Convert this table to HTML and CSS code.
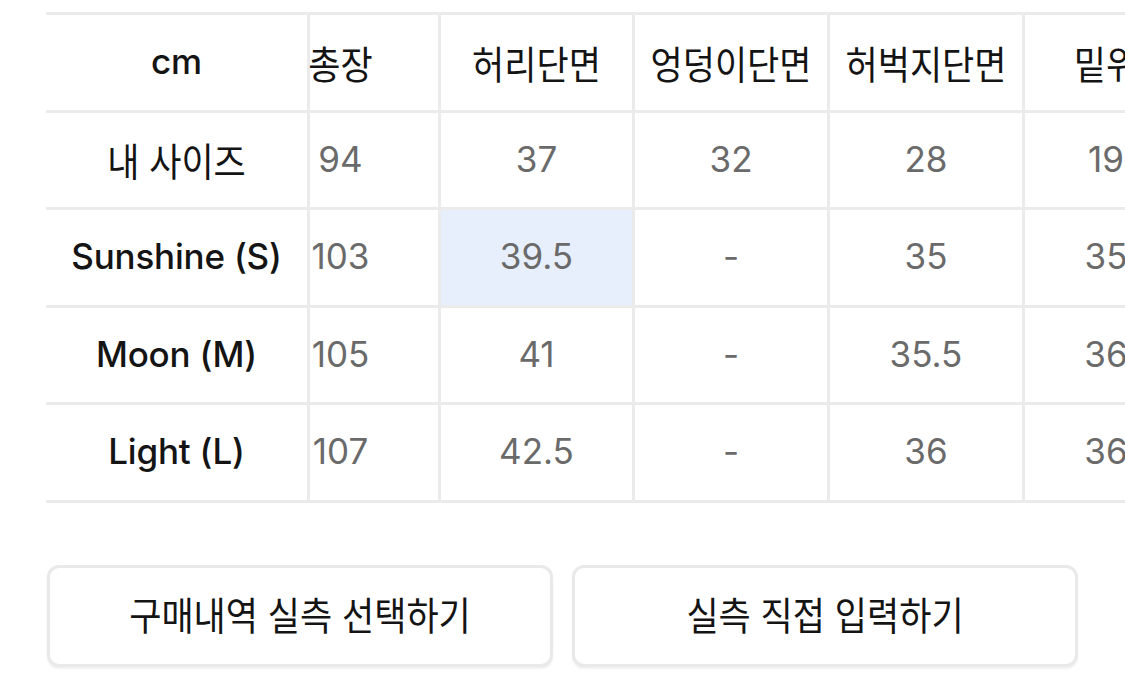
FILE: index.html
```html
<!DOCTYPE html>
<html lang="ko">
<head>
<meta charset="utf-8">
<title>사이즈</title>
<link rel="stylesheet" href="styles.css">
</head>
<body>
<div class="page">
  <div class="table">
    <div class="cell head lat">cm</div>
    <div class="cell head ko first"><span class="k">총장</span></div>
    <div class="cell head ko"><span class="k">허리단면</span></div>
    <div class="cell head ko"><span class="k">엉덩이단면</span></div>
    <div class="cell head ko"><span class="k">허벅지단면</span></div>
    <div class="cell head ko"><span class="k">밑위</span></div>

    <div class="cell head ko"><span class="k">내 사이즈</span></div>
    <div class="cell val first">94</div>
    <div class="cell val">37</div>
    <div class="cell val">32</div>
    <div class="cell val">28</div>
    <div class="cell val">19</div>

    <div class="cell head lat">Sunshine (S)</div>
    <div class="cell val first">103</div>
    <div class="cell val hl">39.5</div>
    <div class="cell val">-</div>
    <div class="cell val">35</div>
    <div class="cell val">35</div>

    <div class="cell head lat">Moon (M)</div>
    <div class="cell val first">105</div>
    <div class="cell val">41</div>
    <div class="cell val">-</div>
    <div class="cell val">35.5</div>
    <div class="cell val">36</div>

    <div class="cell head lat">Light (L)</div>
    <div class="cell val first">107</div>
    <div class="cell val">42.5</div>
    <div class="cell val">-</div>
    <div class="cell val">36</div>
    <div class="cell val">36</div>
  </div>

  <div class="actions">
    <button class="btn"><span class="k">구매내역 실측 선택하기</span></button>
    <button class="btn"><span class="k">실측 직접 입력하기</span></button>
  </div>
</div>
</body>
</html>
```

FILE: styles.css
```css
* { box-sizing: border-box; }
html, body {
  margin: 0;
  padding: 0;
  background: #ffffff;
  overflow: hidden;
}
body {
  width: 1125px;
  height: 677px;
  font-family: "Inter", "Noto Sans CJK KR", sans-serif;
}
.page {
  padding: 12px 0 0 46px;
}
.table {
  display: grid;
  grid-template-columns: 261px 131px 194px 195px 195px 165px;
  grid-auto-rows: 97.5px;
  width: 1141px;
  border-top: 3px solid #ebebeb;
}
.cell {
  display: flex;
  align-items: center;
  justify-content: center;
  border-bottom: 3px solid #ebebeb;
  border-left: 3px solid #ebebeb;
  white-space: nowrap;
}
.cell:nth-child(6n+1) {
  border-left: none;
}
.head {
  color: #141414;
  font-weight: 500;
}
.lat {
  font-size: 35px;
  letter-spacing: -0.2px;
  padding-bottom: 2px;
}
.ko {
  font-family: "Noto Sans CJK KR", sans-serif;
  font-size: 35px;
  font-weight: 400;
  padding-bottom: 2px;
}
.k {
  display: inline-block;
  transform: scaleY(1.1);
}
.val {
  color: #6a6a6a;
  font-size: 35px;
  font-weight: 400;
  padding-bottom: 2px;
}
.first {
  justify-content: center;
  padding-right: 67px;
}
.hl {
  background: #e8effc;
}
.actions {
  display: flex;
  gap: 19px;
  margin-top: 62px;
  margin-left: 1px;
  width: 1031px;
}
.btn {
  flex: 1;
  height: 102px;
  background: #ffffff;
  border: 3px solid #e9e9e9;
  border-radius: 12px;
  box-shadow: 0 2px 2px rgba(0,0,0,0.06);
  font-family: "Noto Sans CJK KR", "Inter", sans-serif;
  font-size: 35px;
  font-weight: 400;
  color: #141414;
  padding: 0 0 6px 0;
}
```
